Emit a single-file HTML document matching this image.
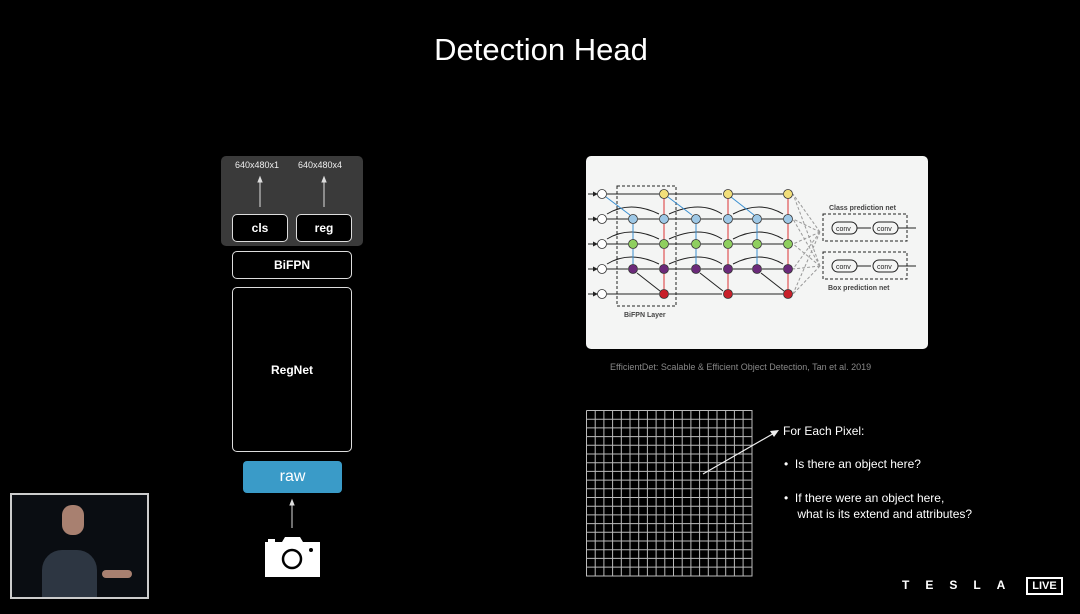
<!DOCTYPE html>
<html><head><meta charset="utf-8"><style>
*{margin:0;padding:0;box-sizing:border-box}
body{width:1080px;height:614px;background:#000;position:relative;overflow:hidden;font-family:"Liberation Sans",sans-serif;color:#fff}
.a{position:absolute}
.box{position:absolute;border:1px solid #ddd;border-radius:5px;background:#000;color:#fff;font-weight:600;display:flex;align-items:center;justify-content:center}
</style></head><body>
<div class="a" style="left:0;top:32px;width:1082px;text-align:center;font-size:31px;line-height:36px">Detection Head</div>

<div class="a" style="left:221px;top:156px;width:142px;height:90px;background:#3a3a3a;border-radius:5px"></div>
<div class="a" style="left:235px;top:160px;font-size:9px;color:#eee">640x480x1</div>
<div class="a" style="left:298px;top:160px;font-size:9px;color:#eee">640x480x4</div>
<svg class="a" style="left:0;top:0" width="1080" height="614">
<g stroke="#ddd" stroke-width="1" fill="#ddd">
<line x1="260" y1="180" x2="260" y2="207"/><path d="M258 182 L260 177 L262 182Z"/>
<line x1="324" y1="180" x2="324" y2="207"/><path d="M322 182 L324 177 L326 182Z"/>
<line x1="292" y1="503" x2="292" y2="528"/><path d="M290 505 L292 500 L294 505Z"/>
</g>
</svg>
<div class="box" style="left:232px;top:214px;width:56px;height:28px;font-size:12px">cls</div>
<div class="box" style="left:296px;top:214px;width:56px;height:28px;font-size:12px">reg</div>
<div class="box" style="left:232px;top:251px;width:120px;height:28px;font-size:12px">BiFPN</div>
<div class="box" style="left:232px;top:287px;width:120px;height:165px;font-size:12px">RegNet</div>
<div class="a" style="left:243px;top:461px;width:99px;height:32px;background:#3a9bc8;border-radius:4px;display:flex;align-items:center;justify-content:center;font-size:16px">raw</div>
<svg class="a" style="left:264px;top:536px" width="57" height="41"><path d="M1 6h17l3-5h15l3 5h17v35H1z" fill="#fff"/><rect x="4" y="3" width="7" height="3" fill="#fff"/><circle cx="28" cy="23" r="9" fill="none" stroke="#000" stroke-width="2.5"/><circle cx="47" cy="14" r="2" fill="#000"/></svg>

<div class="a" style="left:10px;top:493px;width:139px;height:106px;border:2px solid #ccc;background:#0a0d12;overflow:hidden">
<div class="a" style="left:30px;top:55px;width:55px;height:55px;background:#2d3642;border-radius:20px 20px 0 0"></div>
<div class="a" style="left:50px;top:10px;width:22px;height:30px;background:#a88070;border-radius:10px"></div>
<div class="a" style="left:90px;top:75px;width:30px;height:8px;background:#a88070;border-radius:4px"></div>
</div>

<div class="a" style="left:586px;top:156px;width:342px;height:193px;background:#f4f5f4;border-radius:5px"></div>
<svg class="a" style="left:0;top:0" width="1080" height="614">
<defs><marker id="m" markerWidth="5" markerHeight="5" refX="4" refY="2.5" orient="auto"><path d="M0 0L5 2.5L0 5Z" fill="#222"/></marker></defs>
<g stroke="#222" stroke-width="1" fill="none">
<line x1="588" y1="194" x2="597" y2="194" marker-end="url(#m)"/><line x1="588" y1="219" x2="597" y2="219" marker-end="url(#m)"/><line x1="588" y1="244" x2="597" y2="244" marker-end="url(#m)"/><line x1="588" y1="269" x2="597" y2="269" marker-end="url(#m)"/><line x1="588" y1="294" x2="597" y2="294" marker-end="url(#m)"/>
<path d="M607 194H659M669 194H722M733 194H783" /><path d="M607 219H628M638 219H659M669 219H691M701 219H722M733 219H752M762 219H783"/><path d="M607 244H628M638 244H659M669 244H691M701 244H722M733 244H752M762 244H783"/><path d="M607 269H628M638 269H659M669 269H691M701 269H722M733 269H752M762 269H783"/><path d="M607 294H659M669 294H722M733 294H783"/>
<path d="M607 214Q630 200 659 214M669 214Q700 200 722 214M733 214Q760 200 783 214" /><path d="M607 239Q630 225 659 239M669 239Q700 225 722 239M733 239Q760 225 783 239"/><path d="M607 264Q630 250 659 264M669 264Q700 250 722 264M733 264Q760 250 783 264"/>
<path d="M637 273L660 291M700 273L723 291M761 273L784 291"/>
<path d="M820 232L793 194M820 232L793 219M820 232L793 244M820 232L793 269M820 232L793 294M820 266L793 194M820 266L793 219M820 266L793 244M820 266L793 269M820 266L793 294" stroke="#999" stroke-dasharray="3 2"/>
<rect x="617" y="186" width="59" height="120" stroke-dasharray="3 2"/>
<rect x="823" y="214" width="84" height="27" stroke-dasharray="3 2"/><rect x="823" y="252" width="84" height="27" stroke-dasharray="3 2"/>
<rect x="832" y="222" width="25" height="12" rx="6"/><rect x="873" y="222" width="25" height="12" rx="6"/><rect x="832" y="260" width="25" height="12" rx="6"/><rect x="873" y="260" width="25" height="12" rx="6"/>
<path d="M857 228H871M898 228H916M857 266H871M898 266H916"/>
</g>
<g stroke="#3a8fd0" stroke-width="1"><path d="M606 197L630 215M668 197L692 215M731 197L754 215M633 224V240M696 224V240M757 224V240M633 249V265M696 249V265M757 249V265"/></g>
<g stroke="#d33" stroke-width="1"><path d="M664 290V273M664 265V249M664 240V224M664 215V198M728 290V273M728 265V249M728 240V224M728 215V198M788 290V273M788 265V249M788 240V224M788 215V198"/></g>
<g stroke="#333" stroke-width="0.8">
<g fill="#fff"><circle cx="602" cy="194" r="4.5"/><circle cx="602" cy="219" r="4.5"/><circle cx="602" cy="244" r="4.5"/><circle cx="602" cy="269" r="4.5"/><circle cx="602" cy="294" r="4.5"/></g>
<g fill="#f2df7a"><circle cx="664" cy="194" r="4.5"/><circle cx="728" cy="194" r="4.5"/><circle cx="788" cy="194" r="4.5"/></g>
<g fill="#9ec8e6"><circle cx="633" cy="219" r="4.5"/><circle cx="664" cy="219" r="4.5"/><circle cx="696" cy="219" r="4.5"/><circle cx="728" cy="219" r="4.5"/><circle cx="757" cy="219" r="4.5"/><circle cx="788" cy="219" r="4.5"/></g>
<g fill="#8fcf5f"><circle cx="633" cy="244" r="4.5"/><circle cx="664" cy="244" r="4.5"/><circle cx="696" cy="244" r="4.5"/><circle cx="728" cy="244" r="4.5"/><circle cx="757" cy="244" r="4.5"/><circle cx="788" cy="244" r="4.5"/></g>
<g fill="#6b2a7a"><circle cx="633" cy="269" r="4.5"/><circle cx="664" cy="269" r="4.5"/><circle cx="696" cy="269" r="4.5"/><circle cx="728" cy="269" r="4.5"/><circle cx="757" cy="269" r="4.5"/><circle cx="788" cy="269" r="4.5"/></g>
<g fill="#c8202a"><circle cx="664" cy="294" r="4.5"/><circle cx="728" cy="294" r="4.5"/><circle cx="788" cy="294" r="4.5"/></g>
</g>
<g font-family="Liberation Sans" font-weight="bold" fill="#444" font-size="7">
<text x="829" y="210">Class prediction net</text><text x="828" y="290">Box prediction net</text><text x="624" y="317">BiFPN Layer</text>
</g>
<g font-family="Liberation Sans" fill="#222" font-size="7"><text x="836" y="231">conv</text><text x="877" y="231">conv</text><text x="836" y="269">conv</text><text x="877" y="269">conv</text></g>
</svg>
<div class="a" style="left:610px;top:362px;font-size:9px;color:#888">EfficientDet: Scalable &amp; Efficient Object Detection, Tan et al. 2019</div>

<svg class="a" style="left:586px;top:410px" width="167" height="167">
<g stroke="#bbb" stroke-width="1" fill="none">
<path d="M0.5 0.5V166.5M9.2 0.5V166.5M17.9 0.5V166.5M26.6 0.5V166.5M35.3 0.5V166.5M44 0.5V166.5M52.7 0.5V166.5M61.4 0.5V166.5M70.1 0.5V166.5M78.8 0.5V166.5M87.5 0.5V166.5M96.2 0.5V166.5M104.9 0.5V166.5M113.6 0.5V166.5M122.3 0.5V166.5M131 0.5V166.5M139.7 0.5V166.5M148.4 0.5V166.5M157.1 0.5V166.5M166 0.5V166.5"/>
<path d="M0.5 0.5H166.5M0.5 9.2H166.5M0.5 17.9H166.5M0.5 26.6H166.5M0.5 35.3H166.5M0.5 44H166.5M0.5 52.7H166.5M0.5 61.4H166.5M0.5 70.1H166.5M0.5 78.8H166.5M0.5 87.5H166.5M0.5 96.2H166.5M0.5 104.9H166.5M0.5 113.6H166.5M0.5 122.3H166.5M0.5 131H166.5M0.5 139.7H166.5M0.5 148.4H166.5M0.5 157.1H166.5M0.5 166H166.5"/>
</g></svg>
<svg class="a" style="left:700px;top:428px" width="82" height="50"><line x1="3" y1="46" x2="76" y2="4" stroke="#eee" stroke-width="1.2"/><path d="M79 2L70 3L74 9Z" fill="#eee"/></svg>

<div class="a" style="left:783px;top:424px;font-size:12px">For Each Pixel:</div>
<div class="a" style="left:784px;top:457px;font-size:12px">•&nbsp; Is there an object here?</div>
<div class="a" style="left:784px;top:490px;font-size:12px;line-height:16px">•&nbsp; If there were an object here,<br>&nbsp;&nbsp;&nbsp;&nbsp;what is its extend and attributes?</div>

<div class="a" style="left:902px;top:578px;font-size:12px;font-weight:bold;letter-spacing:16px">TESLA</div>
<div class="a" style="left:1026px;top:577px;width:37px;height:18px;border:2px solid #fff;font-size:11px;font-weight:bold;display:flex;align-items:center;justify-content:center">LIVE</div>
</body></html>
